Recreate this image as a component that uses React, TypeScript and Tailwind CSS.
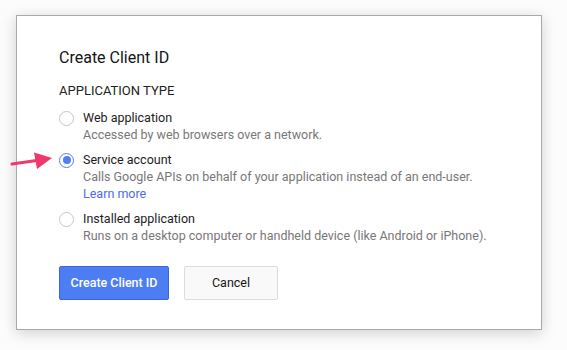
import React from "react";

function Radio({ checked }: { checked?: boolean }) {
  return (
    <span
      className={
        "mt-[1px] flex h-[15px] w-[15px] shrink-0 items-center justify-center rounded-full border bg-white " +
        (checked ? "border-[#4f7ff1] border-[1.5px]" : "border-[#c6c6c6]")
      }
    >
      {checked && <span className="h-[8px] w-[8px] rounded-full bg-[#4f7ff1]" />}
    </span>
  );
}

function Option({
  label,
  desc,
  checked,
  link,
}: {
  label: string;
  desc: string;
  checked?: boolean;
  link?: string;
}) {
  return (
    <div className="flex items-start gap-[9px]">
      <div className="flex h-[17px] items-center">
        <Radio checked={checked} />
      </div>
      <div className="flex flex-col text-[12.5px] leading-[17px]">
        <span className="text-[#1c1c1c]">{label}</span>
        <span className="text-[#777777]">{desc}</span>
        {link && <span className="text-[#4a6ee6]">{link}</span>}
      </div>
    </div>
  );
}

export default function App() {
  return (
    <div
      className="h-[350px] w-[567px] overflow-hidden bg-[#fcfcfc] pl-[16px] pt-[15px]"
      style={{ fontFamily: "Roboto, 'Liberation Sans', sans-serif" }}
    >
      <div className="relative h-[315px] w-[526px] border border-[#a9a9a9] bg-white pl-[42px] pt-[32px] shadow-[0_3px_14px_rgba(0,0,0,0.18)]">
        <div className="text-[16px] leading-[20px] text-[#141414]">Create Client ID</div>
        <div className="mt-[15px] text-[13px] leading-[16px] text-[#222222]">
          APPLICATION TYPE
        </div>
        <div className="mt-[10px] flex flex-col gap-[8px]">
          <Option label="Web application" desc="Accessed by web browsers over a network." />
          <Option
            checked
            label="Service account"
            desc="Calls Google APIs on behalf of your application instead of an end-user."
            link="Learn more"
          />
          <Option
            label="Installed application"
            desc="Runs on a desktop computer or handheld device (like Android or iPhone)."
          />
        </div>
        <div className="mt-[22px] flex gap-[15px]">
          <button className="h-[34px] w-[110px] rounded-[2px] border border-[#3d64e6] bg-[#4d7df3] text-[12.5px] font-medium text-white">
            Create Client ID
          </button>
          <button className="h-[34px] w-[94px] rounded-[2px] border border-[#dcdcdc] bg-[#f9f9f9] text-[12.5px] text-[#141414]">
            Cancel
          </button>
        </div>
        <svg
          className="absolute left-[-7px] top-[134px]"
          width="46"
          height="22"
          viewBox="0 0 46 22"
        >
          <path d="M2 14 L30 10" stroke="#ef386b" strokeWidth="3" strokeLinecap="round" fill="none" />
          <path d="M24 2.5 L42 8 L27 19 Z" fill="#ef386b" />
        </svg>
      </div>
    </div>
  );
}
